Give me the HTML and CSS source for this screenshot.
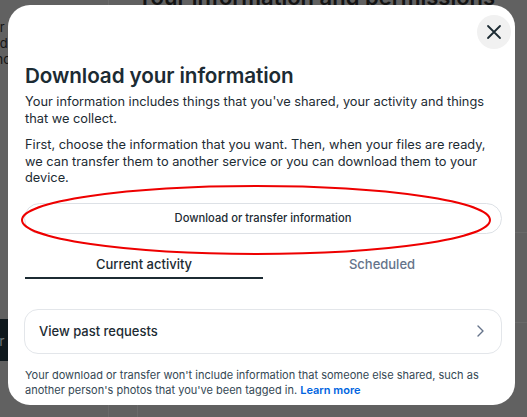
FILE: index.html
```html
<!DOCTYPE html>
<html lang="en">
<head>
<meta charset="utf-8">
<title>Download your information</title>
<link rel="stylesheet" href="styles.css">
</head>
<body>
<div class="backdrop">
  <div class="bg-rule bg-rule-v1"></div>
  <div class="bg-rule bg-rule-v2"></div>
  <div class="bg-rule bg-rule-h1"></div>
  <div class="bg-rule bg-rule-h2"></div>
  <div class="bg-heading">Your information and permissions</div>
  <div class="bg-side">
    <div>ter</div>
    <div>ted</div>
    <div>enc</div>
  </div>
  <div class="bg-dark"><span>er</span></div>
</div>

<div class="modal" role="dialog" aria-labelledby="dlg-title">
  <button class="close" aria-label="Close">
    <svg width="16" height="16" viewBox="0 0 16 16"><path d="M2 2 L14 14 M14 2 L2 14" stroke="#1c2b33" stroke-width="1.8" stroke-linecap="round" fill="none"/></svg>
  </button>
  <h1 id="dlg-title" class="title">Download your information</h1>
  <p class="text">Your information includes things that you've shared, your activity and things that we collect.</p>
  <p class="text">First, choose the information that you want. Then, when your files are ready, we can transfer them to another service or you can download them to your device.</p>
  <button class="pill">Download or transfer information</button>
  <div class="tabs">
    <div class="tab active">Current activity</div>
    <div class="tab">Scheduled</div>
  </div>
  <div class="card">
    <span>View past requests</span>
    <svg width="10" height="14" viewBox="0 0 10 14"><path d="M3 2 L8 7 L3 12" stroke="#65738a" stroke-width="1.4" fill="none" stroke-linecap="round" stroke-linejoin="round"/></svg>
  </div>
  <p class="note">Your download or transfer won't include information that someone else shared, such as another person's photos that you've been tagged in. <a href="#">Learn more</a></p>
</div>

<svg class="annot" width="476" height="76" viewBox="0 0 476 76"><ellipse cx="237" cy="37" rx="234" ry="34" fill="none" stroke="#ee0000" stroke-width="2"/></svg>
</body>
</html>
```

FILE: styles.css
```css
* { box-sizing: border-box; }
html, body { margin: 0; padding: 0; }
body {
  width: 527px;
  height: 417px;
  overflow: hidden;
  background: #616161;
  font-family: "Inter", "Roboto", sans-serif;
  color: #1c2b33;
  position: relative;
}
.backdrop { position: relative; width: 527px; height: 417px; overflow: hidden; }
.bg-heading {
  position: absolute; left: 137px; top: -16px;
  font-size: 22px; font-weight: 600; color: #141414; white-space: nowrap;
}
.bg-side {
  position: absolute; left: -12px; top: 19px;
  font-size: 13px; line-height: 16px; color: #141414;
}
.bg-dark {
  position: absolute; left: 0; top: 319px; width: 40px; height: 42px;
  background: #0f181d; color: #6c7378; font-size: 14px;
  padding: 13px 0 0 0;
}
.bg-dark span { margin-left: -9px; }
.bg-rule { position: absolute; background: #6a6a6a; }
.bg-rule-v1 { left: 108px; top: 0; width: 1px; height: 417px; }
.bg-rule-v2 { left: 137px; top: 400px; width: 1px; height: 17px; }
.bg-rule-h1 { left: 500px; top: 232px; width: 27px; height: 1px; }
.bg-rule-h2 { left: 500px; top: 322px; width: 27px; height: 1px; }

.modal {
  position: absolute; left: 8px; top: 5px;
  width: 507px; height: 400px;
  background: #fff; border-radius: 22px;
  padding: 58px 13px 0 17px;
}
.close {
  position: absolute; top: 10px; right: 4px;
  width: 34px; height: 34px; border-radius: 50%;
  border: 0; background: #f1f1f1; padding: 0;
  display: flex; align-items: center; justify-content: center;
}
.title {
  margin: 0; font-size: 20.7px; line-height: 26px; font-weight: 600;
  letter-spacing: -0.1px;
}
.text {
  margin: 5px 0 0; font-size: 12.8px; line-height: 16.5px; font-weight: 400;
}
.text + .text { margin-top: 10px; }
.pill {
  display: block; width: 478px; height: 31px; margin: 16px 0 0 -1px;
  border: 1px solid #dde1e6; border-radius: 16px; background: #fff;
  font-family: inherit; font-size: 11.2px; font-weight: 500; color: #1c2b33;
}
.tabs { display: flex; width: 476px; margin-top: 14px; }
.tab {
  flex: 1; text-align: center; font-size: 13px; font-weight: 500;
  line-height: 16px; padding: 8px 0 5px; color: #65738a;
  border-bottom: 2px solid transparent;
}
.tab.active { color: #1c2b33; border-bottom-color: #1c2b33; }
.card {
  display: flex; align-items: center; justify-content: space-between;
  width: 478px; height: 45px; margin: 30px 0 0 -1px;
  border: 1px solid #e3e6ea; border-radius: 14px;
  padding: 0 16px 0 14px;
  font-size: 13px; font-weight: 500;
}
.note {
  margin: 14px 0 0; font-size: 11px; line-height: 15.5px; color: #344854;
}
.note a { color: #0064e0; font-weight: 600; text-decoration: none; }
.annot { position: absolute; left: 19px; top: 183px; }
```
